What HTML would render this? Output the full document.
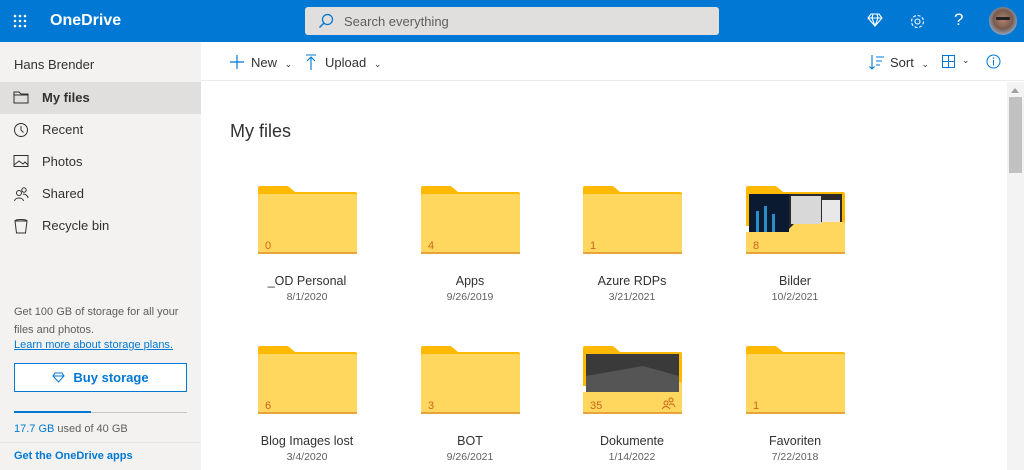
<!DOCTYPE html>
<html><head><meta charset="utf-8"><style>
*{box-sizing:border-box;margin:0;padding:0}
body{width:1024px;height:470px;overflow:hidden;font-family:"Liberation Sans",sans-serif;background:#fff;position:relative;color:#323130}
.top{position:absolute;left:0;top:0;width:1024px;height:42px;background:#0078d4}
.abs{position:absolute}
.side{position:absolute;left:0;top:42px;width:201px;height:428px;background:#f3f2f1}
.nav{position:absolute;left:0;width:201px;height:32px;font-size:13px;line-height:32px;padding-left:42px;color:#323130}
.nav svg{position:absolute;left:13px;top:8px}
.cmd{position:absolute;left:201px;top:42px;width:823px;height:39px;border-bottom:1px solid #edebe9;font-size:13px}
.f{position:absolute;width:160px;text-align:center}
.f .nm{position:absolute;top:88px;width:160px;font-size:12.5px;color:#323130}
.f .dt{position:absolute;top:105px;width:160px;font-size:10.5px;color:#605e5c}
.f svg{position:absolute;left:31px;top:0}
</style></head><body>
<div class="top">
<svg class="abs" style="left:13px;top:14px" width="14" height="14"><g fill="#fff"><circle cx="2" cy="2" r="1.3"/><circle cx="7" cy="2" r="1.3"/><circle cx="12" cy="2" r="1.3"/><circle cx="2" cy="7" r="1.3"/><circle cx="7" cy="7" r="1.3"/><circle cx="12" cy="7" r="1.3"/><circle cx="2" cy="12" r="1.3"/><circle cx="7" cy="12" r="1.3"/><circle cx="12" cy="12" r="1.3"/></g></svg>
<div class="abs" style="left:50px;top:12px;color:#fff;font-size:16px;font-weight:bold">OneDrive</div>
<div class="abs" style="left:305px;top:7px;width:414px;height:28px;background:#e1dfdd;border-radius:3px"></div>
<svg class="abs" style="left:318px;top:13px" width="16" height="16"><circle cx="9.5" cy="6.5" r="5" fill="none" stroke="#0078d4" stroke-width="1.3"/><path d="M6 10L1.5 14.5" stroke="#0078d4" stroke-width="1.4"/></svg>
<div class="abs" style="left:344px;top:14px;font-size:13px;color:#605e5c">Search everything</div>
<svg class="abs" style="left:867px;top:13px" width="16" height="14"><path d="M4 1H12L15 5L8 13L1 5Z M1 5H15 M6 1L5 5L8 13L11 5L10 1" fill="none" stroke="#fff" stroke-width="1.1"/></svg>
<svg class="abs" style="left:909px;top:13px" width="17" height="17"><circle cx="8.5" cy="8.5" r="2.5" fill="none" stroke="#fff" stroke-width="1.1"/><circle cx="8.5" cy="8.5" r="6" fill="none" stroke="#fff" stroke-width="1.1" stroke-dasharray="3 1.7"/></svg>
<div class="abs" style="left:954px;top:10px;color:#fff;font-size:17px">?</div>
<div class="abs" style="left:989px;top:7px;width:28px;height:28px;border-radius:50%;background:radial-gradient(circle at 50% 45%,#b08570 0,#7a5a4c 45%,#8fa9c6 75%);"></div>
<div class="abs" style="left:996px;top:17px;width:14px;height:3px;background:#222;border-radius:1px"></div>
</div>
<div class="side">
<div class="abs" style="left:14px;top:15px;font-size:13px;color:#323130">Hans Brender</div>
<div class="nav" style="top:40px;background:#e1dfdd;font-weight:bold">
<svg width="16" height="14"><path d="M1 2H6L8 4H15V13H1Z M1 5H15" fill="none" stroke="#323130" stroke-width="1"/></svg>My files</div>
<div class="nav" style="top:72px"><svg width="16" height="16"><circle cx="8" cy="8" r="6.5" fill="none" stroke="#323130"/><path d="M8 4V8L10.5 10.5" fill="none" stroke="#323130"/></svg>Recent</div>
<div class="nav" style="top:104px"><svg width="16" height="14"><rect x="1" y="1.5" width="14" height="11" fill="none" stroke="#323130"/><path d="M1 11L6 7L10 10L12 8L15 11" fill="none" stroke="#323130"/></svg>Photos</div>
<div class="nav" style="top:136px"><svg width="16" height="16"><circle cx="6" cy="7" r="2.5" fill="none" stroke="#323130"/><circle cx="11" cy="4" r="2.2" fill="none" stroke="#323130"/><path d="M1.5 15C2 11 10 11 10.5 15 M10 8C13 8 15 10 15 12" fill="none" stroke="#323130"/></svg>Shared</div>
<div class="nav" style="top:168px"><svg width="16" height="16"><path d="M2 3H14L12.5 15H3.5Z M2 3C2 1 14 1 14 3" fill="none" stroke="#323130"/></svg>Recycle bin</div>
<div class="abs" style="left:14px;top:261px;font-size:11px;line-height:18px;color:#605e5c;width:180px">Get 100 GB of storage for all your files and photos.</div>
<div class="abs" style="left:14px;top:297px;font-size:11px;color:#0078d4;text-decoration:underline">Learn more about storage plans.</div>
<div class="abs" style="left:14px;top:321px;width:173px;height:29px;border:1px solid #0078d4;background:#fff;font-size:13px;font-weight:bold;color:#0078d4;text-align:center;line-height:27px">
<svg width="13" height="11" style="vertical-align:-1px;margin-right:8px"><path d="M3 1H10L12 4L6.5 10L1 4Z M1 4H12" fill="none" stroke="#0078d4" stroke-width="1"/></svg>Buy storage</div>
<div class="abs" style="left:14px;top:370px;width:173px;height:1px;background:#c8c6c4"></div>
<div class="abs" style="left:14px;top:369px;width:77px;height:2px;background:#0078d4"></div>
<div class="abs" style="left:14px;top:381px;font-size:11px;color:#605e5c"><span style="color:#0078d4">17.7 GB</span> used of 40 GB</div>
<div class="abs" style="left:0;top:400px;width:201px;height:1px;background:#e8e6e4"></div>
<div class="abs" style="left:14px;top:408px;font-size:11px;font-weight:bold;color:#0078d4">Get the OneDrive apps</div>
</div>
<div class="cmd">
<svg class="abs" style="left:29px;top:13px" width="14" height="14"><path d="M7 0V14M0 7H14" stroke="#0078d4" stroke-width="1.2"/></svg>
<div class="abs" style="left:50px;top:13px">New <span style="font-size:9px;margin-left:4px">&#8964;</span></div>
<svg class="abs" style="left:104px;top:12px" width="12" height="16"><path d="M1 1H11M6 3V16M2 7L6 3L10 7" fill="none" stroke="#0078d4" stroke-width="1.1"/></svg>
<div class="abs" style="left:124px;top:13px">Upload <span style="font-size:9px;margin-left:4px">&#8964;</span></div>
<svg class="abs" style="left:668px;top:12px" width="16" height="16"><path d="M3 1V15M0.5 12.5L3 15L5.5 12.5M7 3H15M7 7H13M7 11H11" fill="none" stroke="#0078d4" stroke-width="1.1"/></svg>
<div class="abs" style="left:689px;top:13px">Sort <span style="font-size:9px;margin-left:4px">&#8964;</span></div>
<svg class="abs" style="left:741px;top:13px" width="13" height="13"><rect x="0.5" y="0.5" width="12" height="12" fill="none" stroke="#0078d4"/><path d="M6.5 0V13M0 6.5H13" stroke="#0078d4"/></svg>
<div class="abs" style="left:761px;top:13px;font-size:9px">&#8964;</div>
<svg class="abs" style="left:785px;top:12px" width="15" height="15"><circle cx="7.5" cy="7.5" r="6.5" fill="none" stroke="#0078d4"/><path d="M7.5 6V11.5" stroke="#0078d4"/><circle cx="7.5" cy="4" r="0.8" fill="#0078d4"/></svg>
</div>
<div class="abs" style="left:1007px;top:82px;width:17px;height:388px;background:#f3f3f3"></div>
<div class="abs" style="left:1011px;top:88px;width:0;height:0;border-left:4px solid transparent;border-right:4px solid transparent;border-bottom:5px solid #a0a0a0"></div>
<div class="abs" style="left:1009px;top:97px;width:13px;height:76px;background:#c1c1c1"></div>
<div class="abs" style="left:230px;top:121px;font-size:18px;color:#323130">My files</div>

<svg width="0" height="0" style="position:absolute"><defs>
<g id="fold"><path d="M0 2Q0 0 2 0H30L37 6H97Q99 6 99 8V16H0Z" fill="#ffb900"/><rect x="0" y="8" width="99" height="60" rx="2" fill="#ffd75e"/><rect x="0" y="66" width="99" height="2" fill="#e8a33a"/></g>
<g id="foldimg"><path d="M0 2Q0 0 2 0H30L37 6H97Q99 6 99 8V40H0Z" fill="#ffb900"/><rect x="3" y="8" width="93" height="42" fill="#2a2a2a"/><path d="M0 46H40L50 36H97Q99 36 99 38V66Q99 68 97 68H2Q0 68 0 66Z" fill="#ffd75e"/><rect x="0" y="66" width="99" height="2" fill="#e8a33a"/></g>
</defs></svg>

<div class="f" style="left:227px;top:186px"><svg width="99" height="70"><use href="#fold"/><text x="7" y="63" font-size="11" fill="#c8661b" font-family="Liberation Sans">0</text></svg><div class="nm">_OD Personal</div><div class="dt">8/1/2020</div></div>
<div class="f" style="left:390px;top:186px"><svg width="99" height="70"><use href="#fold"/><text x="7" y="63" font-size="11" fill="#c8661b" font-family="Liberation Sans">4</text></svg><div class="nm">Apps</div><div class="dt">9/26/2019</div></div>
<div class="f" style="left:552px;top:186px"><svg width="99" height="70"><use href="#fold"/><text x="7" y="63" font-size="11" fill="#c8661b" font-family="Liberation Sans">1</text></svg><div class="nm">Azure RDPs</div><div class="dt">3/21/2021</div></div>
<div class="f" style="left:715px;top:186px"><svg width="99" height="70"><use href="#foldimg"/><rect x="3" y="8" width="40" height="38" fill="#0a1a30"/><rect x="10" y="25" width="3" height="21" fill="#2a8fc9"/><rect x="18" y="20" width="3" height="26" fill="#2a8fc9"/><rect x="26" y="28" width="3" height="18" fill="#2a8fc9"/><rect x="45" y="10" width="30" height="28" fill="#d8d8d8"/><rect x="76" y="14" width="18" height="22" fill="#e8e8e8"/><text x="7" y="63" font-size="11" fill="#c8661b" font-family="Liberation Sans">8</text></svg><div class="nm">Bilder</div><div class="dt">10/2/2021</div></div>

<div class="f" style="left:227px;top:346px"><svg width="99" height="70"><use href="#fold"/><text x="7" y="63" font-size="11" fill="#c8661b" font-family="Liberation Sans">6</text></svg><div class="nm">Blog Images lost</div><div class="dt">3/4/2020</div></div>
<div class="f" style="left:390px;top:346px"><svg width="99" height="70"><use href="#fold"/><text x="7" y="63" font-size="11" fill="#c8661b" font-family="Liberation Sans">3</text></svg><div class="nm">BOT</div><div class="dt">9/26/2021</div></div>
<div class="f" style="left:552px;top:346px"><svg width="99" height="70"><use href="#foldimg"/><rect x="3" y="8" width="93" height="38" fill="#3a3a3a"/><path d="M3 46V30L60 20L96 30V46Z" fill="#555"/><text x="7" y="63" font-size="11" fill="#c8661b" font-family="Liberation Sans">35</text><circle cx="83" cy="57" r="2" fill="none" stroke="#c8661b"/><circle cx="88" cy="54" r="2" fill="none" stroke="#c8661b"/><path d="M79 63Q83 58 87 63M86 59Q90 56 92 61" fill="none" stroke="#c8661b"/></svg><div class="nm">Dokumente</div><div class="dt">1/14/2022</div></div>
<div class="f" style="left:715px;top:346px"><svg width="99" height="70"><use href="#fold"/><text x="7" y="63" font-size="11" fill="#c8661b" font-family="Liberation Sans">1</text></svg><div class="nm">Favoriten</div><div class="dt">7/22/2018</div></div>
</body></html>
